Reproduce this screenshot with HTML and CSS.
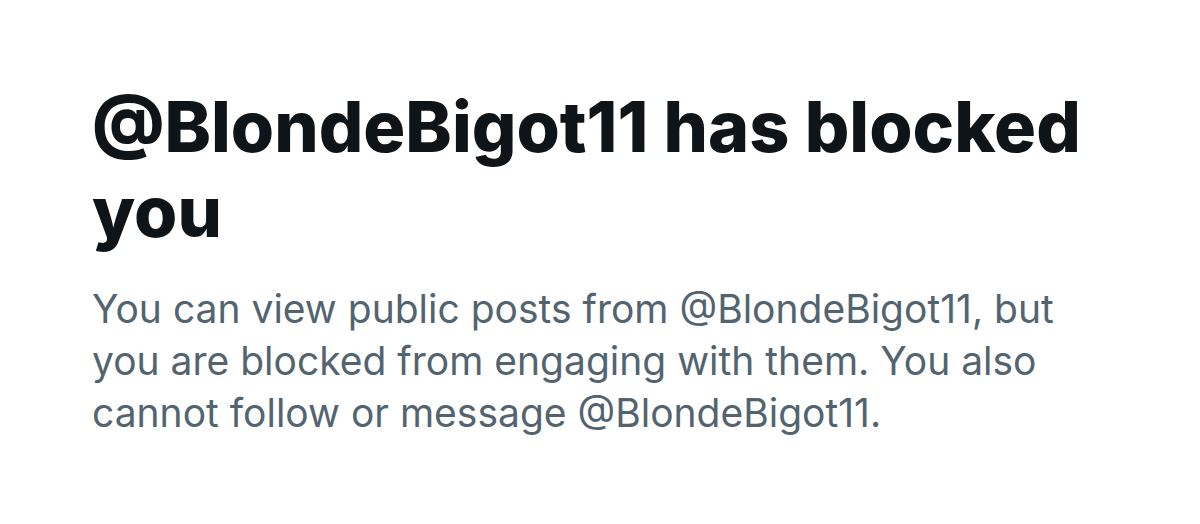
FILE: index.html
```html
<!DOCTYPE html>
<html lang="en">
<head>
  <meta charset="UTF-8" />
  <title>Blocked</title>
  <link rel="stylesheet" href="styles.css">
</head>
<body>
  <div class="blocked">
    <h1 class="title">@BlondeBigot11 has blocked you</h1>
    <p class="desc">You can view public posts from @BlondeBigot11, but you are blocked from engaging with them. You also cannot follow or message @BlondeBigot11.</p>
  </div>
</body>
</html>
```

FILE: styles.css
```css
* {
  box-sizing: border-box;
}
body {
  margin: 0;
  background: #ffffff;
  font-family: Inter, "Noto Sans", sans-serif;
}
.blocked {
  padding: 84px 92px 0;
}
.title {
  margin: 0;
  font-size: 70px;
  line-height: 85px;
  font-weight: 800;
  color: #0f1419;
}
.desc {
  margin: 29px 0 0;
  font-size: 39px;
  line-height: 52px;
  font-weight: 400;
  color: #536471;
}
```
